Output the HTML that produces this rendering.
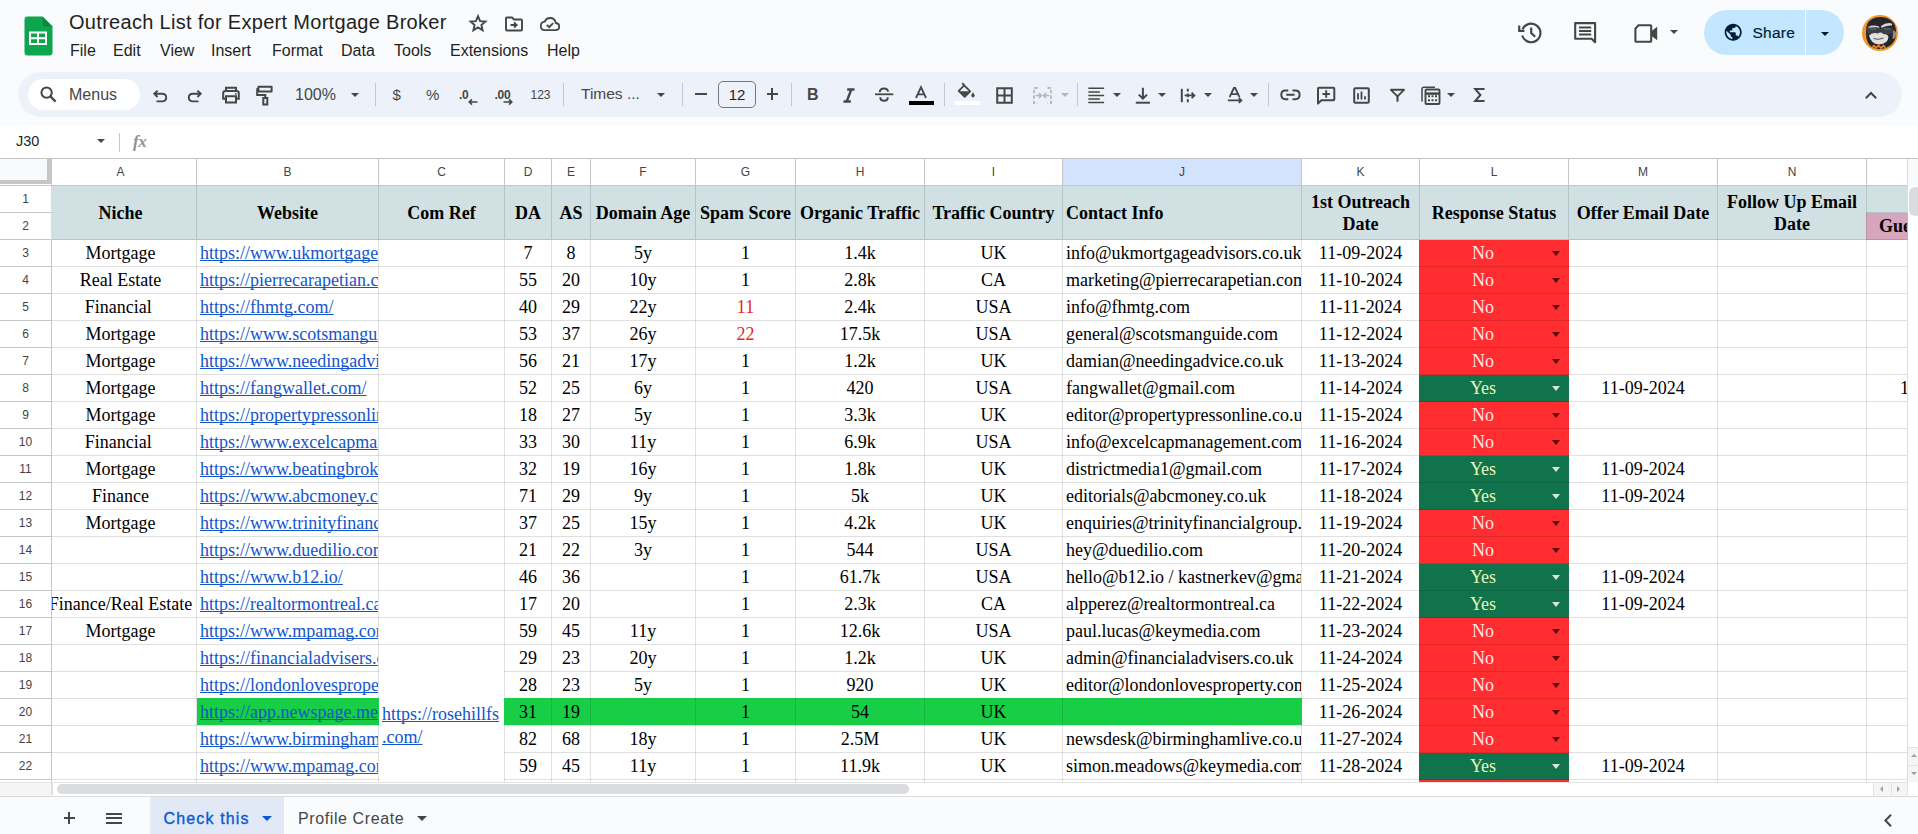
<!DOCTYPE html>
<html><head><meta charset="utf-8">
<style>
html,body{margin:0;padding:0}
body{width:1918px;height:834px;overflow:hidden;position:relative;background:#f9fbfd;font-family:"Liberation Sans",sans-serif;color:#1f1f1f}
.a{position:absolute}
.gl{background:#e2e2e2}
.gla{background:rgba(0,0,0,0.12)}
.cell{font-family:"Liberation Serif",serif;font-size:18px;line-height:26px;color:#000;white-space:nowrap;overflow:hidden}
.cell.hd{font-weight:bold;line-height:22px}
.cc{display:flex;justify-content:center;align-items:center;text-align:center;white-space:nowrap}
.lc{display:flex;align-items:center;white-space:nowrap}
.cell.hd1{font-weight:bold}
.ln a{color:#1155cc;text-decoration:underline;text-decoration-skip-ink:none;text-underline-offset:1px;text-decoration-thickness:1px}
.chip.no{color:#ffe6e6}
.chip.yes{color:#e9f5b9}
.tri{width:0;height:0;border-left:4.5px solid transparent;border-right:4.5px solid transparent;border-top:4.5px solid #444746}
.ui{font-family:"Liberation Sans",sans-serif;white-space:nowrap;line-height:1}
.menu{font-size:16px;color:#1f1f1f;top:43px}
.ic{position:absolute;overflow:visible}
.sep{position:absolute;width:1px;background:#c7c7c7;top:83px;height:23px}
.rh{position:absolute;left:0;width:51px;height:26px;line-height:26px;text-align:center;font-size:12px;color:#444;font-family:"Liberation Sans",sans-serif}
.ch{position:absolute;top:159px;height:26px;line-height:26px;text-align:center;font-size:12px;color:#444;font-family:"Liberation Sans",sans-serif}
</style></head><body>
<!-- header -->
<svg class="ic" style="left:24px;top:16px" width="29" height="40" viewBox="0 0 29 40">
 <path d="M3.5 0.5H18.5L28.5 10.5V36.5Q28.5 39.5 25.5 39.5H3.5Q0.5 39.5 0.5 36.5V3.5Q0.5 0.5 3.5 0.5Z" fill="#0ea54f"/>
 <path d="M18.5 0.5L28.5 10.5H21.5Q18.5 10.5 18.5 7.5Z" fill="#0a8a3f"/>
 <path d="M5 15.5H23V29H5Z M7 17.5V21.3H13V17.5Z M15 17.5V21.3H21V17.5Z M7 23.2V27H13V23.2Z M15 23.2V27H21V23.2Z" fill="#fff" fill-rule="evenodd"/>
</svg>
<div class="a ui" style="left:69px;top:12px;font-size:20px;letter-spacing:0.3px;color:#1f1f1f">Outreach List for Expert Mortgage Broker</div>
<svg class="ic" style="left:468px;top:14px" width="20" height="19" viewBox="0 0 20 19"><path d="M10 2.2L12.1 7.1L17.4 7.5L13.4 11L14.6 16.2L10 13.4L5.4 16.2L6.6 11L2.6 7.5L7.9 7.1Z" fill="none" stroke="#444746" stroke-width="1.9" stroke-linejoin="miter"/></svg>
<svg class="ic" style="left:504px;top:16px" width="20" height="16" viewBox="0 0 20 16"><path d="M2 2.5Q2 1.5 3 1.5H8L10 3.5H17Q18 3.5 18 4.5V13.5Q18 14.5 17 14.5H3Q2 14.5 2 13.5Z" fill="none" stroke="#444746" stroke-width="1.9"/><path d="M6.5 9H12.5M10 6.3L12.7 9L10 11.7" fill="none" stroke="#444746" stroke-width="1.8"/></svg>
<svg class="ic" style="left:539px;top:16px" width="22" height="16" viewBox="0 0 22 16"><path d="M6 14.2H16.5Q20.2 14.2 20.2 10.6Q20.2 7.3 16.8 7Q16 2 11 2Q7.2 2 5.8 5.6Q1.8 6 1.8 10Q1.8 14.2 6 14.2Z" fill="none" stroke="#444746" stroke-width="1.8"/><path d="M7.8 9L10.2 11.2L14.2 7.2" fill="none" stroke="#444746" stroke-width="1.8"/></svg>
<div class="a ui menu" style="left:70px">File</div>
<div class="a ui menu" style="left:113px">Edit</div>
<div class="a ui menu" style="left:160px">View</div>
<div class="a ui menu" style="left:211px">Insert</div>
<div class="a ui menu" style="left:272px">Format</div>
<div class="a ui menu" style="left:341px">Data</div>
<div class="a ui menu" style="left:394px">Tools</div>
<div class="a ui menu" style="left:450px">Extensions</div>
<div class="a ui menu" style="left:547px">Help</div>

<!-- top right -->
<svg class="ic" style="left:1517.5px;top:20px" width="26" height="25" viewBox="0 0 26 25"><path d="M4.6 9.2A9.3 9.3 0 1 1 4.2 15.5" fill="none" stroke="#444746" stroke-width="2.2"/><path d="M1.2 5.6V10.8H6.4" fill="none" stroke="#444746" stroke-width="2.2"/><path d="M13.2 7.5V13L17.2 16.8" fill="none" stroke="#444746" stroke-width="2.2"/></svg>
<svg class="ic" style="left:1573px;top:21px" width="25" height="24" viewBox="0 0 25 24"><path d="M2.2 2.1H22.1V21.3L18.6 17.8H2.2Z" fill="none" stroke="#444746" stroke-width="2.1" stroke-linejoin="round"/><path d="M6 6.6H18.2M6 10H18.2M6 13.4H18.2" stroke="#444746" stroke-width="2"/></svg>
<svg class="ic" style="left:1634px;top:23px" width="25" height="21" viewBox="0 0 25 21"><path d="M4.5 2.2H16.3Q17.2 2.2 17.2 3.1V17.9Q17.2 18.8 16.3 18.8H2.3Q1.4 18.8 1.4 17.9V5.6Z" fill="none" stroke="#444746" stroke-width="2.1" stroke-linejoin="round"/><path d="M17.2 8.3L23.2 3.8V17.2L17.2 12.7Z" fill="#444746"/></svg>
<div class="a tri" style="left:1669.5px;top:30px"></div>
<div class="a" style="left:1704px;top:10px;width:140px;height:45px;border-radius:23px;background:#c2e7ff"></div>
<div class="a" style="left:1805px;top:10px;width:1px;height:45px;background:#f9fbfd"></div>
<svg class="ic" style="left:1723.3px;top:22.3px" width="20.4" height="20.4" viewBox="0 0 24 24"><path d="M12 2C6.48 2 2 6.48 2 12s4.48 10 10 10 10-4.48 10-10S17.52 2 12 2zm-1 17.93c-3.950-.49-7-3.85-7-7.930 0-.62.08-1.21.21-1.79L9 15v1c0 1.1.9 2 2 2v1.93zm6.9-2.54c-.26-.81-1-1.39-1.9-1.39h-1v-3c0-.55-.45-1-1-1H8v-2h2c.55 0 1-.45 1-1V7h2c1.1 0 2-.9 2-2v-.41c2.93 1.19 5 4.06 5 7.41 0 2.08-.8 3.970-2.1 5.390z" fill="#001d35"/></svg>
<div class="a ui" style="left:1752.5px;top:25px;font-size:15.5px;letter-spacing:0.25px;-webkit-text-stroke:0.2px #001d35;color:#001d35">Share</div>
<div class="a tri" style="left:1820.5px;top:31.5px;border-top-color:#001d35;border-left-width:4.5px;border-right-width:4.5px"></div>
<svg class="ic" style="left:1862px;top:15px" width="36" height="36" viewBox="0 0 36 36">
 <circle cx="18" cy="18" r="18" fill="#f2982a"/>
 <path d="M4 17Q3.5 7 11 3.5Q18 1 25 3Q33 6 34 15Q35 24 30 29Q25 34 17 34Q9 33.5 6 28Q3.5 23 4 17Z" fill="#26262c"/>
 <path d="M31 15.5Q34.5 15.5 34 20Q33.5 24 30.5 24Z" fill="#8e8e90"/>
 <path d="M6 12Q11 9.5 17 11.5L17.5 13Q11 11.8 6.5 14Z M19 11Q24 7 30 8.5L30 10.5Q24.5 10 19.5 13Z" fill="#d6d6d6"/>
 <path d="M4.5 15Q4.5 12.5 8 12.5H15.5Q18 12.5 18.5 14.5Q19 12.5 21.5 12.5H29Q31.5 12.5 31 15.5Q30.5 19.5 26 19.5H22Q19.5 19.5 18.5 16.5Q17.5 19.5 15 19.5H8.5Q4.5 19.5 4.5 15Z" fill="#3d4048"/>
 <path d="M8 14H14M22 14H28" stroke="#6b6e75" stroke-width="1"/>
 <path d="M7 20.5Q11 17 16 18.5Q19 16.5 21 19Q26 19 26.5 22Q26 29 17 29.5Q9 29 7 20.5Z" fill="#e2e0da"/>
 <path d="M11.5 23.5Q16 25.5 21.5 23" fill="none" stroke="#55555a" stroke-width="1"/>
 <path d="M10 33L12 30.5L14 33L16.5 30.5L19 33L21.5 30.5L23.5 33" fill="none" stroke="#e8862a" stroke-width="1.6"/>
</svg>

<!-- toolbar -->
<div class="a" style="left:18px;top:72px;width:1884px;height:45px;border-radius:22.5px;background:#edf2fa"></div>
<div class="a" style="left:28px;top:79px;width:112px;height:31px;border-radius:15.5px;background:#fff"></div>
<svg class="ic" style="left:40px;top:86px" width="17" height="17" viewBox="0 0 17 17"><circle cx="6.6" cy="6.6" r="5.2" fill="none" stroke="#444746" stroke-width="2"/><path d="M10.4 10.4L15.6 15.6" stroke="#444746" stroke-width="2.2"/></svg>
<div class="a ui" style="left:69px;top:86.5px;font-size:16px;color:#444746">Menus</div>
<svg class="ic" style="left:152px;top:89px" width="16" height="14" viewBox="0 0 16 14"><path d="M2.5 4.8H10Q14.2 4.8 14.2 8.6Q14.2 12.4 10 12.4H4.5" fill="none" stroke="#444746" stroke-width="1.9"/><path d="M5.6 1.6L2.3 4.8L5.6 8" fill="none" stroke="#444746" stroke-width="1.9"/></svg>
<svg class="ic" style="left:187px;top:89px" width="16" height="14" viewBox="0 0 16 14"><path d="M13.5 4.8H6Q1.8 4.8 1.8 8.6Q1.8 12.4 6 12.4H11.5" fill="none" stroke="#444746" stroke-width="1.9"/><path d="M10.4 1.6L13.7 4.8L10.4 8" fill="none" stroke="#444746" stroke-width="1.9"/></svg>
<svg class="ic" style="left:221px;top:86px" width="20" height="18" viewBox="0 0 20 18"><path d="M5 5V1.8H15V5" fill="none" stroke="#444746" stroke-width="2"/><path d="M5 12.8H2.2V7.2Q2.2 5 4.4 5H15.6Q17.8 5 17.8 7.2V12.8H15" fill="none" stroke="#444746" stroke-width="2"/><path d="M5 10.2H15V16.4H5Z" fill="none" stroke="#444746" stroke-width="2"/><circle cx="14.8" cy="7.9" r="0.9" fill="#444746"/></svg>
<svg class="ic" style="left:256px;top:85px" width="19" height="21" viewBox="0 0 19 21"><path d="M2.4 1.8H15.6V6.6H2.4Z" fill="none" stroke="#444746" stroke-width="2" stroke-linejoin="round"/><path d="M2.4 4.2H1.2V10H9.3V13" fill="none" stroke="#444746" stroke-width="2"/><path d="M7.3 13H11.3V19.5H7.3Z" fill="none" stroke="#444746" stroke-width="2"/></svg>
<div class="a ui" style="left:295px;top:87px;font-size:16px;color:#444746">100%</div>
<div class="a tri" style="left:350.5px;top:92.5px"></div>
<div class="sep" style="left:375px"></div>
<div class="a ui" style="left:392.5px;top:86.5px;font-size:15px;color:#444746">$</div>
<div class="a ui" style="left:426px;top:87px;font-size:15px;color:#444746">%</div>
<div class="a ui" style="left:459px;top:89px;font-size:12px;color:#444746;font-weight:bold;letter-spacing:-0.3px">.0</div>
<svg class="ic" style="left:466.5px;top:97.5px" width="12" height="8" viewBox="0 0 12 8"><path d="M10.5 4H2.5M5 1.3L2.2 4L5 6.7" fill="none" stroke="#444746" stroke-width="1.6"/></svg>
<div class="a ui" style="left:494.5px;top:89px;font-size:12px;color:#444746;font-weight:bold;letter-spacing:-0.3px">.00</div>
<svg class="ic" style="left:502px;top:97.5px" width="12" height="8" viewBox="0 0 12 8"><path d="M1.5 4H9.5M7 1.3L9.8 4L7 6.7" fill="none" stroke="#444746" stroke-width="1.6"/></svg>
<div class="a ui" style="left:530.5px;top:88.5px;font-size:12px;color:#444746">123</div>
<div class="sep" style="left:563px"></div>
<div class="a ui" style="left:581px;top:86px;font-size:15.5px;color:#444746">Times ...</div>
<div class="a tri" style="left:656.5px;top:92.5px"></div>
<div class="sep" style="left:682px"></div>
<div class="a" style="left:695px;top:93px;width:12px;height:2px;background:#444746"></div>
<div class="a" style="left:718px;top:81px;width:36px;height:25px;border:1px solid #747775;border-radius:5px"></div>
<div class="a ui" style="left:718px;top:86.5px;width:38px;text-align:center;font-size:15px;color:#1f1f1f">12</div>
<div class="a" style="left:766.5px;top:93.3px;width:11.5px;height:2px;background:#444746"></div>
<div class="a" style="left:771.3px;top:88.3px;width:2px;height:12px;background:#444746"></div>
<div class="sep" style="left:791px"></div>
<div class="a ui" style="left:807px;top:87px;font-size:16px;font-weight:bold;color:#444746">B</div>
<svg class="ic" style="left:842px;top:88px" width="14" height="15" viewBox="0 0 14 15"><path d="M5.2 1.5H12.5M1.5 13.5H8.8M9.3 1.5L4.7 13.5" fill="none" stroke="#444746" stroke-width="2.3"/></svg>
<svg class="ic" style="left:874px;top:87px" width="20" height="16" viewBox="0 0 20 16"><path d="M1 7.3H19.3" stroke="#444746" stroke-width="1.8"/><path d="M5.8 5.2Q6 1.6 10 1.6Q13.6 1.6 14.1 4.6" fill="none" stroke="#444746" stroke-width="2"/><path d="M6.3 10.2Q6.3 13.7 10.1 13.7Q13.8 13.7 13.8 10.2" fill="none" stroke="#444746" stroke-width="2"/></svg>
<svg class="ic" style="left:914px;top:86px" width="14" height="13" viewBox="0 0 14 13"><path d="M2 12L7 1.2L12 12M3.8 8.4H10.2" fill="none" stroke="#444746" stroke-width="1.8"/></svg>
<div class="a" style="left:909px;top:101px;width:25px;height:4px;background:#000"></div>
<div class="sep" style="left:944px"></div>
<svg class="ic" style="left:957px;top:82px" width="19" height="17" viewBox="0 0 19 17"><path d="M5.2 1.2L7.3 3.3" stroke="#444746" stroke-width="1.8"/><path d="M7.2 3.3L13.2 9.3L7.7 14.8L1.7 8.8Z" fill="none" stroke="#444746" stroke-width="1.8" stroke-linejoin="round"/><path d="M2.6 9.3H12.6L7.7 14.2Z" fill="#444746"/><path d="M16 10.2Q14.3 12.6 14.3 13.6Q14.3 15.4 16 15.4Q17.7 15.4 17.7 13.6Q17.7 12.6 16 10.2Z" fill="#444746"/></svg>
<div class="a" style="left:954px;top:101px;width:26px;height:4px;background:#fff"></div>
<svg class="ic" style="left:996px;top:87px" width="17" height="17" viewBox="0 0 17 17"><path d="M1.2 1.2H15.8V15.8H1.2Z M8.5 1.2V15.8M1.2 8.5H15.8" fill="none" stroke="#444746" stroke-width="2"/></svg>
<svg class="ic" style="left:1033px;top:87px" width="19" height="17" viewBox="0 0 19 17"><path d="M4.5 1H1V16H4.5M14.5 1H18V16H14.5" fill="none" stroke="#b4b7ba" stroke-width="1.8" stroke-dasharray="3.4 2"/><path d="M2.8 8.5H8M6 6L8.3 8.5L6 11M16.2 8.5H11M13 6L10.7 8.5L13 11" fill="none" stroke="#b4b7ba" stroke-width="1.7"/></svg>
<div class="a tri" style="left:1060.5px;top:92.5px;border-top-color:#b4b7ba"></div>
<div class="sep" style="left:1077px"></div>
<svg class="ic" style="left:1088px;top:87px" width="17" height="17" viewBox="0 0 17 17"><path d="M0.3 1.3H16.1M0.3 4.9H11.8M0.3 8.5H16.1M0.3 12H11.8M0.3 15.5H16.1" stroke="#444746" stroke-width="1.5"/></svg>
<div class="a tri" style="left:1112.5px;top:92.5px"></div>
<svg class="ic" style="left:1135px;top:87px" width="16" height="17" viewBox="0 0 16 17"><path d="M0.8 15.7H15" stroke="#444746" stroke-width="2"/><path d="M7.9 0.8V11.5M3.8 7.6L7.9 11.7L12 7.6" fill="none" stroke="#444746" stroke-width="2"/></svg>
<div class="a tri" style="left:1158px;top:92.5px"></div>
<svg class="ic" style="left:1180px;top:88px" width="16" height="15" viewBox="0 0 16 15"><path d="M1.8 0.8V14.2" stroke="#444746" stroke-width="2"/><path d="M7.8 0.8V3.5M7.8 5.6V9.2M7.8 11.3V14.2" stroke="#444746" stroke-width="2"/><path d="M4.6 7.4H14.4M11.6 4.6L14.4 7.4L11.6 10.2" fill="none" stroke="#444746" stroke-width="1.8"/></svg>
<div class="a tri" style="left:1203.5px;top:92.5px"></div>
<svg class="ic" style="left:1227px;top:87px" width="17" height="17" viewBox="0 0 17 17"><path d="M2.6 10.2L6.9 1H8.2L12.5 10.2M4 7.2H11.1" fill="none" stroke="#444746" stroke-width="1.8"/><path d="M0.8 13.4H14.2M11.8 10.9L14.4 13.4L11.8 15.9" fill="none" stroke="#444746" stroke-width="1.8"/></svg>
<div class="a tri" style="left:1250px;top:92.5px"></div>
<div class="sep" style="left:1268px"></div>
<svg class="ic" style="left:1280px;top:89px" width="21" height="12" viewBox="0 0 21 12"><path d="M8.3 1.5H5.5Q1.3 1.5 1.3 5.8Q1.3 10.2 5.5 10.2H8.3M12.5 1.5H15.3Q19.6 1.5 19.6 5.8Q19.6 10.2 15.3 10.2H12.5M6.2 5.8H14.6" fill="none" stroke="#444746" stroke-width="2"/></svg>
<svg class="ic" style="left:1316px;top:86px" width="20" height="19" viewBox="0 0 20 19"><path d="M2 17.6V2.8Q2 1.8 3 1.8H17.3Q18.3 1.8 18.3 2.8V13.2Q18.3 14.2 17.3 14.2H5.4Z" fill="none" stroke="#444746" stroke-width="2" stroke-linejoin="round"/><path d="M10.2 4.3V11.7M6.5 8H13.9" stroke="#444746" stroke-width="1.9"/></svg>
<svg class="ic" style="left:1353px;top:87px" width="17" height="17" viewBox="0 0 17 17"><path d="M1.2 2.2Q1.2 1.2 2.2 1.2H14.8Q15.8 1.2 15.8 2.2V14.8Q15.8 15.8 14.8 15.8H2.2Q1.2 15.8 1.2 14.8Z" fill="none" stroke="#444746" stroke-width="2"/><path d="M5 6.2V12.5M8.5 4.5V12.5M12 9.3V12.5" stroke="#444746" stroke-width="1.8"/></svg>
<svg class="ic" style="left:1390px;top:88px" width="15" height="14" viewBox="0 0 15 14"><path d="M1 1.8H14L7.5 8.4Z" fill="none" stroke="#444746" stroke-width="1.9" stroke-linejoin="round"/><path d="M7.5 7.5V13.7" stroke="#444746" stroke-width="2.1"/></svg>
<svg class="ic" style="left:1420px;top:86px" width="21" height="19" viewBox="0 0 21 19"><path d="M2 15.5V3Q2 1.2 3.8 1.2H15" fill="none" stroke="#444746" stroke-width="1.5"/><path d="M5.5 4.5Q5.5 3.5 6.5 3.5H18.5Q19.5 3.5 19.5 4.5V17Q19.5 18 18.5 18H6.5Q5.5 18 5.5 17Z" fill="none" stroke="#444746" stroke-width="1.9"/><path d="M5.8 7.6H19.2" stroke="#444746" stroke-width="2.5"/><path d="M8 10.3H10M11.5 10.3H13.5M15 10.3H17M8 14.3H10M11.5 14.3H13.5M15 14.3H17" stroke="#444746" stroke-width="2"/></svg>
<div class="a tri" style="left:1446.5px;top:92.5px"></div>
<svg class="ic" style="left:1474px;top:88px" width="11" height="14" viewBox="0 0 11 14"><path d="M10.6 1H1.2L6.4 7L1.2 13H10.6" fill="none" stroke="#444746" stroke-width="2"/></svg>
<svg class="ic" style="left:1864px;top:90px" width="14" height="10" viewBox="0 0 14 10"><path d="M1.8 8.2L7 3L12.2 8.2" fill="none" stroke="#444746" stroke-width="2"/></svg>

<!-- formula bar -->
<div class="a" style="left:0;top:126px;width:1918px;height:32px;background:#fff"></div>
<div class="a" style="left:0;top:158px;width:1918px;height:1px;background:#c4c7c5"></div>
<div class="a ui" style="left:16px;top:134px;font-size:14.5px;color:#1f1f1f">J30</div>
<div class="a tri" style="left:96.5px;top:139.3px"></div>
<div class="a" style="left:119px;top:133px;width:1px;height:19px;background:#c7c7c7"></div>
<div class="a" style="left:133px;top:133px;font-family:'Liberation Serif',serif;font-style:italic;font-weight:bold;font-size:17px;line-height:1;color:#909293;letter-spacing:-0.5px">fx</div>

<div class="a" style="left:0;top:159px;width:1918px;height:26px;background:#fff"></div>
<div class="a" style="left:1063px;top:159px;width:238px;height:26px;background:#d3e3fd"></div>
<div class="ch" style="left:45px;width:151px">A</div>
<div class="ch" style="left:197px;width:181px">B</div>
<div class="ch" style="left:379px;width:125px">C</div>
<div class="ch" style="left:505px;width:46px">D</div>
<div class="ch" style="left:552px;width:38px">E</div>
<div class="ch" style="left:591px;width:104px">F</div>
<div class="ch" style="left:696px;width:99px">G</div>
<div class="ch" style="left:796px;width:128px">H</div>
<div class="ch" style="left:925px;width:137px">I</div>
<div class="ch" style="left:1063px;width:238px">J</div>
<div class="ch" style="left:1302px;width:117px">K</div>
<div class="ch" style="left:1420px;width:148px">L</div>
<div class="ch" style="left:1569px;width:148px">M</div>
<div class="ch" style="left:1718px;width:148px">N</div>
<div class="ch" style="left:1867px;width:40px"></div>
<div class="a" style="left:196px;top:159px;width:1px;height:26px;background:#c4c7c5"></div>
<div class="a" style="left:378px;top:159px;width:1px;height:26px;background:#c4c7c5"></div>
<div class="a" style="left:504px;top:159px;width:1px;height:26px;background:#c4c7c5"></div>
<div class="a" style="left:551px;top:159px;width:1px;height:26px;background:#c4c7c5"></div>
<div class="a" style="left:590px;top:159px;width:1px;height:26px;background:#c4c7c5"></div>
<div class="a" style="left:695px;top:159px;width:1px;height:26px;background:#c4c7c5"></div>
<div class="a" style="left:795px;top:159px;width:1px;height:26px;background:#c4c7c5"></div>
<div class="a" style="left:924px;top:159px;width:1px;height:26px;background:#c4c7c5"></div>
<div class="a" style="left:1062px;top:159px;width:1px;height:26px;background:#c4c7c5"></div>
<div class="a" style="left:1301px;top:159px;width:1px;height:26px;background:#c4c7c5"></div>
<div class="a" style="left:1419px;top:159px;width:1px;height:26px;background:#c4c7c5"></div>
<div class="a" style="left:1568px;top:159px;width:1px;height:26px;background:#c4c7c5"></div>
<div class="a" style="left:1717px;top:159px;width:1px;height:26px;background:#c4c7c5"></div>
<div class="a" style="left:1866px;top:159px;width:1px;height:26px;background:#c4c7c5"></div>
<div class="a" style="left:1907px;top:159px;width:1px;height:26px;background:#c4c7c5"></div>
<div class="a" style="left:0;top:185px;width:1907px;height:1px;background:#c4c7c5"></div>
<div class="a" style="left:0;top:159px;width:47px;height:21px;background:#f8f9fa"></div>
<div class="a" style="left:0;top:180px;width:51px;height:4px;background:#c6c6c6"></div>
<div class="a" style="left:47px;top:159px;width:4px;height:25px;background:#c6c6c6"></div>
<div class="a" style="left:0;top:186px;width:51px;height:594px;background:#fff"></div>
<div class="rh" style="top:186px">1</div>
<div class="a" style="left:0;top:212px;width:51px;height:1px;background:#c4c7c5"></div>
<div class="rh" style="top:213px">2</div>
<div class="a" style="left:0;top:239px;width:51px;height:1px;background:#c4c7c5"></div>
<div class="rh" style="top:240px">3</div>
<div class="a" style="left:0;top:266px;width:51px;height:1px;background:#c4c7c5"></div>
<div class="rh" style="top:267px">4</div>
<div class="a" style="left:0;top:293px;width:51px;height:1px;background:#c4c7c5"></div>
<div class="rh" style="top:294px">5</div>
<div class="a" style="left:0;top:320px;width:51px;height:1px;background:#c4c7c5"></div>
<div class="rh" style="top:321px">6</div>
<div class="a" style="left:0;top:347px;width:51px;height:1px;background:#c4c7c5"></div>
<div class="rh" style="top:348px">7</div>
<div class="a" style="left:0;top:374px;width:51px;height:1px;background:#c4c7c5"></div>
<div class="rh" style="top:375px">8</div>
<div class="a" style="left:0;top:401px;width:51px;height:1px;background:#c4c7c5"></div>
<div class="rh" style="top:402px">9</div>
<div class="a" style="left:0;top:428px;width:51px;height:1px;background:#c4c7c5"></div>
<div class="rh" style="top:429px">10</div>
<div class="a" style="left:0;top:455px;width:51px;height:1px;background:#c4c7c5"></div>
<div class="rh" style="top:456px">11</div>
<div class="a" style="left:0;top:482px;width:51px;height:1px;background:#c4c7c5"></div>
<div class="rh" style="top:483px">12</div>
<div class="a" style="left:0;top:509px;width:51px;height:1px;background:#c4c7c5"></div>
<div class="rh" style="top:510px">13</div>
<div class="a" style="left:0;top:536px;width:51px;height:1px;background:#c4c7c5"></div>
<div class="rh" style="top:537px">14</div>
<div class="a" style="left:0;top:563px;width:51px;height:1px;background:#c4c7c5"></div>
<div class="rh" style="top:564px">15</div>
<div class="a" style="left:0;top:590px;width:51px;height:1px;background:#c4c7c5"></div>
<div class="rh" style="top:591px">16</div>
<div class="a" style="left:0;top:617px;width:51px;height:1px;background:#c4c7c5"></div>
<div class="rh" style="top:618px">17</div>
<div class="a" style="left:0;top:644px;width:51px;height:1px;background:#c4c7c5"></div>
<div class="rh" style="top:645px">18</div>
<div class="a" style="left:0;top:671px;width:51px;height:1px;background:#c4c7c5"></div>
<div class="rh" style="top:672px">19</div>
<div class="a" style="left:0;top:698px;width:51px;height:1px;background:#c4c7c5"></div>
<div class="rh" style="top:699px">20</div>
<div class="a" style="left:0;top:725px;width:51px;height:1px;background:#c4c7c5"></div>
<div class="rh" style="top:726px">21</div>
<div class="a" style="left:0;top:752px;width:51px;height:1px;background:#c4c7c5"></div>
<div class="rh" style="top:753px">22</div>
<div class="a" style="left:0;top:779px;width:51px;height:1px;background:#c4c7c5"></div>
<div class="a" style="left:51px;top:159px;width:1px;height:623px;background:#c4c7c5"></div>
<div class="a" style="left:0;top:780px;width:51px;height:2px;background:#fff"></div>
<div class="a" style="left:0;top:782px;width:1918px;height:1px;background:#e3e3e3"></div>
<div class="a" style="left:0;top:783px;width:1918px;height:13px;background:#fff"></div>
<div class="a" style="left:0;top:783px;width:51px;height:13px;background:#f5f5f5"></div>
<div class="a" style="left:51px;top:783px;width:2px;height:12px;background:#dedede"></div>
<div class="a" style="left:57px;top:784px;width:852px;height:10px;border-radius:5px;background:#dadce0"></div>
<div class="a" style="left:1873px;top:783px;width:34px;height:13px;background:#f5f5f5"></div>
<div class="a" style="left:1891px;top:783px;width:1px;height:13px;background:#e3e3e3"></div>
<div class="a" style="left:1873px;top:783px;width:1px;height:13px;background:#e3e3e3"></div>
<div class="a" style="left:1907px;top:783px;width:1px;height:13px;background:#e3e3e3"></div>
<div class="a" style="left:1880px;top:785.5px;width:0;height:0;border-top:3.5px solid transparent;border-bottom:3.5px solid transparent;border-right:3.5px solid #9aa0a6"></div>
<div class="a" style="left:1897px;top:785.5px;width:0;height:0;border-top:3.5px solid transparent;border-bottom:3.5px solid transparent;border-left:3.5px solid #9aa0a6"></div>
<div class="a" style="left:0;top:796px;width:1918px;height:1px;background:#dadce0"></div>
<div class="a" style="left:1907px;top:159px;width:1px;height:624px;background:#dcdcdc"></div>
<div class="a" style="left:1908px;top:159px;width:10px;height:26px;background:#f8f9fa"></div>
<div class="a" style="left:1908px;top:186px;width:10px;height:597px;background:#fff"></div>
<div class="a" style="left:1909px;top:187px;width:12px;height:29px;border-radius:6px;background:#dadce0"></div>
<div class="a" style="left:1908px;top:747px;width:10px;height:35px;background:#f5f5f5"></div>
<div class="a" style="left:1908px;top:747px;width:10px;height:1px;background:#e3e3e3"></div>
<div class="a" style="left:1908px;top:765px;width:10px;height:1px;background:#e3e3e3"></div>
<div class="a" style="left:1911px;top:753.5px;width:0;height:0;border-left:3.5px solid transparent;border-right:3.5px solid transparent;border-bottom:3.5px solid #9aa0a6"></div>
<div class="a" style="left:1911px;top:772px;width:0;height:0;border-left:3.5px solid transparent;border-right:3.5px solid transparent;border-top:3.5px solid #9aa0a6"></div>
<div class="a" style="left:0;top:797px;width:1918px;height:37px;background:#f9fbfd"></div>
<div class="a" style="left:63.5px;top:817.2px;width:11.5px;height:2px;background:#444746"></div>
<div class="a" style="left:68.2px;top:812.3px;width:2px;height:12px;background:#444746"></div>
<div class="a" style="left:106px;top:813px;width:16px;height:2px;background:#444746"></div>
<div class="a" style="left:106px;top:817.2px;width:16px;height:2px;background:#444746"></div>
<div class="a" style="left:106px;top:821.6px;width:16px;height:2px;background:#444746"></div>
<div class="a" style="left:150px;top:797px;width:134px;height:37px;background:#e1e9f7"></div>
<div class="a ui" style="left:163.5px;top:811px;font-size:16px;letter-spacing:1.15px;-webkit-text-stroke:0.35px #0b57d0;color:#0b57d0">Check this</div>
<div class="a tri" style="left:261.5px;top:816px;border-top-color:#0b57d0;border-left-width:5px;border-right-width:5px;border-top-width:5.5px"></div>
<div class="a ui" style="left:298px;top:811px;font-size:16px;letter-spacing:0.6px;color:#444746">Profile Create</div>
<div class="a tri" style="left:417px;top:816px;border-left-width:5px;border-right-width:5px;border-top-width:5.5px"></div>
<svg class="ic" style="left:1883px;top:813px" width="10" height="15" viewBox="0 0 10 15"><path d="M8 1.8L2.4 7.5L8 13.2" fill="none" stroke="#444746" stroke-width="2"/></svg>
<div class="a" style="left:52px;top:186px;width:1855px;height:596px;background:#fff"></div>
<div class="a gl" style="left:196px;top:186px;width:1px;height:596px"></div>
<div class="a gl" style="left:378px;top:186px;width:1px;height:596px"></div>
<div class="a gl" style="left:504px;top:186px;width:1px;height:596px"></div>
<div class="a gl" style="left:551px;top:186px;width:1px;height:596px"></div>
<div class="a gl" style="left:590px;top:186px;width:1px;height:596px"></div>
<div class="a gl" style="left:695px;top:186px;width:1px;height:596px"></div>
<div class="a gl" style="left:795px;top:186px;width:1px;height:596px"></div>
<div class="a gl" style="left:924px;top:186px;width:1px;height:596px"></div>
<div class="a gl" style="left:1062px;top:186px;width:1px;height:596px"></div>
<div class="a gl" style="left:1301px;top:186px;width:1px;height:596px"></div>
<div class="a gl" style="left:1419px;top:186px;width:1px;height:596px"></div>
<div class="a gl" style="left:1568px;top:186px;width:1px;height:596px"></div>
<div class="a gl" style="left:1717px;top:186px;width:1px;height:596px"></div>
<div class="a gl" style="left:1866px;top:186px;width:1px;height:596px"></div>
<div class="a" style="left:51px;top:186px;width:146px;height:54px;background:#d0e0e3"></div>
<div class="a" style="left:196px;top:186px;width:183px;height:54px;background:#d0e0e3"></div>
<div class="a" style="left:378px;top:186px;width:127px;height:54px;background:#d0e0e3"></div>
<div class="a" style="left:504px;top:186px;width:48px;height:54px;background:#d0e0e3"></div>
<div class="a" style="left:551px;top:186px;width:40px;height:54px;background:#d0e0e3"></div>
<div class="a" style="left:590px;top:186px;width:106px;height:54px;background:#d0e0e3"></div>
<div class="a" style="left:695px;top:186px;width:101px;height:54px;background:#d0e0e3"></div>
<div class="a" style="left:795px;top:186px;width:130px;height:54px;background:#d0e0e3"></div>
<div class="a" style="left:924px;top:186px;width:139px;height:54px;background:#d0e0e3"></div>
<div class="a" style="left:1062px;top:186px;width:240px;height:54px;background:#d0e0e3"></div>
<div class="a" style="left:1301px;top:186px;width:119px;height:54px;background:#d0e0e3"></div>
<div class="a" style="left:1419px;top:186px;width:150px;height:54px;background:#d0e0e3"></div>
<div class="a" style="left:1568px;top:186px;width:150px;height:54px;background:#d0e0e3"></div>
<div class="a" style="left:1717px;top:186px;width:150px;height:54px;background:#d0e0e3"></div>
<div class="a" style="left:1866px;top:186px;width:42px;height:27px;background:#d0e0e3"></div>
<div class="a" style="left:1866px;top:213px;width:42px;height:27px;background:#d5a6bd"></div>
<div class="a" style="left:1419px;top:240px;width:150px;height:27px;background:#ff2d2f"></div>
<div class="a" style="left:1419px;top:267px;width:150px;height:27px;background:#ff2d2f"></div>
<div class="a" style="left:1419px;top:294px;width:150px;height:27px;background:#ff2d2f"></div>
<div class="a" style="left:1419px;top:321px;width:150px;height:27px;background:#ff2d2f"></div>
<div class="a" style="left:1419px;top:348px;width:150px;height:27px;background:#ff2d2f"></div>
<div class="a" style="left:1419px;top:375px;width:150px;height:27px;background:#11734b"></div>
<div class="a" style="left:1419px;top:402px;width:150px;height:27px;background:#ff2d2f"></div>
<div class="a" style="left:1419px;top:429px;width:150px;height:27px;background:#ff2d2f"></div>
<div class="a" style="left:1419px;top:456px;width:150px;height:27px;background:#11734b"></div>
<div class="a" style="left:1419px;top:483px;width:150px;height:27px;background:#11734b"></div>
<div class="a" style="left:1419px;top:510px;width:150px;height:27px;background:#ff2d2f"></div>
<div class="a" style="left:1419px;top:537px;width:150px;height:27px;background:#ff2d2f"></div>
<div class="a" style="left:1419px;top:564px;width:150px;height:27px;background:#11734b"></div>
<div class="a" style="left:1419px;top:591px;width:150px;height:27px;background:#11734b"></div>
<div class="a" style="left:1419px;top:618px;width:150px;height:27px;background:#ff2d2f"></div>
<div class="a" style="left:1419px;top:645px;width:150px;height:27px;background:#ff2d2f"></div>
<div class="a" style="left:1419px;top:672px;width:150px;height:27px;background:#ff2d2f"></div>
<div class="a" style="left:1419px;top:699px;width:150px;height:27px;background:#ff2d2f"></div>
<div class="a" style="left:1419px;top:726px;width:150px;height:27px;background:#ff2d2f"></div>
<div class="a" style="left:1419px;top:753px;width:150px;height:27px;background:#11734b"></div>
<div class="a" style="left:1419px;top:780px;width:150px;height:2px;background:#ff2d2f"></div>
<div class="a" style="left:197px;top:698px;width:182px;height:27px;background:#18ce47"></div>
<div class="a" style="left:504px;top:698px;width:798px;height:27px;background:#18ce47"></div>
<div class="a gla" style="left:1866px;top:212px;width:41px;height:1px"></div>
<div class="a gla" style="left:52px;top:239px;width:1855px;height:1px"></div>
<div class="a gla" style="left:52px;top:266px;width:1855px;height:1px"></div>
<div class="a gla" style="left:52px;top:293px;width:1855px;height:1px"></div>
<div class="a gla" style="left:52px;top:320px;width:1855px;height:1px"></div>
<div class="a gla" style="left:52px;top:347px;width:1855px;height:1px"></div>
<div class="a gla" style="left:52px;top:374px;width:1855px;height:1px"></div>
<div class="a gla" style="left:52px;top:401px;width:1855px;height:1px"></div>
<div class="a gla" style="left:52px;top:428px;width:1855px;height:1px"></div>
<div class="a gla" style="left:52px;top:455px;width:1855px;height:1px"></div>
<div class="a gla" style="left:52px;top:482px;width:1855px;height:1px"></div>
<div class="a gla" style="left:52px;top:509px;width:1855px;height:1px"></div>
<div class="a gla" style="left:52px;top:536px;width:1855px;height:1px"></div>
<div class="a gla" style="left:52px;top:563px;width:1855px;height:1px"></div>
<div class="a gla" style="left:52px;top:590px;width:1855px;height:1px"></div>
<div class="a gla" style="left:52px;top:617px;width:1855px;height:1px"></div>
<div class="a gla" style="left:52px;top:644px;width:1855px;height:1px"></div>
<div class="a gla" style="left:52px;top:671px;width:327px;height:1px"></div>
<div class="a gla" style="left:504px;top:671px;width:1403px;height:1px"></div>
<div class="a gla" style="left:52px;top:698px;width:145px;height:1px"></div>
<div class="a gla" style="left:1302px;top:698px;width:605px;height:1px"></div>
<div class="a gla" style="left:52px;top:725px;width:327px;height:1px"></div>
<div class="a gla" style="left:504px;top:725px;width:1403px;height:1px"></div>
<div class="a gla" style="left:52px;top:752px;width:327px;height:1px"></div>
<div class="a gla" style="left:504px;top:752px;width:1403px;height:1px"></div>
<div class="a gla" style="left:52px;top:779px;width:327px;height:1px"></div>
<div class="a gla" style="left:504px;top:779px;width:1403px;height:1px"></div>
<div class="a gla" style="left:196px;top:186px;width:1px;height:53px"></div>
<div class="a gla" style="left:378px;top:186px;width:1px;height:53px"></div>
<div class="a gla" style="left:504px;top:186px;width:1px;height:53px"></div>
<div class="a gla" style="left:551px;top:186px;width:1px;height:53px"></div>
<div class="a gla" style="left:590px;top:186px;width:1px;height:53px"></div>
<div class="a gla" style="left:695px;top:186px;width:1px;height:53px"></div>
<div class="a gla" style="left:795px;top:186px;width:1px;height:53px"></div>
<div class="a gla" style="left:924px;top:186px;width:1px;height:53px"></div>
<div class="a gla" style="left:1062px;top:186px;width:1px;height:53px"></div>
<div class="a gla" style="left:1301px;top:186px;width:1px;height:53px"></div>
<div class="a gla" style="left:1419px;top:186px;width:1px;height:53px"></div>
<div class="a gla" style="left:1568px;top:186px;width:1px;height:53px"></div>
<div class="a gla" style="left:1717px;top:186px;width:1px;height:53px"></div>
<div class="a gla" style="left:1866px;top:186px;width:1px;height:53px"></div>
<div class="a gla" style="left:551px;top:698px;width:1px;height:27px"></div>
<div class="a gla" style="left:590px;top:698px;width:1px;height:27px"></div>
<div class="a gla" style="left:695px;top:698px;width:1px;height:27px"></div>
<div class="a gla" style="left:795px;top:698px;width:1px;height:27px"></div>
<div class="a gla" style="left:924px;top:698px;width:1px;height:27px"></div>
<div class="a gla" style="left:1062px;top:698px;width:1px;height:27px"></div>
<div class="a cell hd" style="left:52px;top:186px;width:144px;height:53px;"><div class="a cc" style="left:-7px;top:0;width:151px;height:53px">Niche</div></div>
<div class="a cell hd" style="left:197px;top:186px;width:181px;height:53px;"><div class="a cc" style="left:0px;top:0;width:181px;height:53px">Website</div></div>
<div class="a cell hd" style="left:379px;top:186px;width:125px;height:53px;"><div class="a cc" style="left:0px;top:0;width:125px;height:53px">Com Ref</div></div>
<div class="a cell hd" style="left:505px;top:186px;width:46px;height:53px;"><div class="a cc" style="left:0px;top:0;width:46px;height:53px">DA</div></div>
<div class="a cell hd" style="left:552px;top:186px;width:38px;height:53px;"><div class="a cc" style="left:0px;top:0;width:38px;height:53px">AS</div></div>
<div class="a cell hd" style="left:591px;top:186px;width:104px;height:53px;"><div class="a cc" style="left:0px;top:0;width:104px;height:53px">Domain Age</div></div>
<div class="a cell hd" style="left:696px;top:186px;width:99px;height:53px;"><div class="a cc" style="left:0px;top:0;width:99px;height:53px">Spam Score</div></div>
<div class="a cell hd" style="left:796px;top:186px;width:128px;height:53px;"><div class="a cc" style="left:0px;top:0;width:128px;height:53px">Organic Traffic</div></div>
<div class="a cell hd" style="left:925px;top:186px;width:137px;height:53px;"><div class="a cc" style="left:0px;top:0;width:137px;height:53px">Traffic Country</div></div>
<div class="a cell hd" style="left:1063px;top:186px;width:238px;height:53px;"><div class="a lc" style="left:3px;top:0;height:53px">Contact Info</div></div>
<div class="a cell hd" style="left:1302px;top:186px;width:117px;height:53px;"><div class="a cc" style="left:0px;top:0;width:117px;height:53px">1st Outreach<br>Date</div></div>
<div class="a cell hd" style="left:1420px;top:186px;width:148px;height:53px;"><div class="a cc" style="left:0px;top:0;width:148px;height:53px">Response Status</div></div>
<div class="a cell hd" style="left:1569px;top:186px;width:148px;height:53px;"><div class="a cc" style="left:0px;top:0;width:148px;height:53px">Offer Email Date</div></div>
<div class="a cell hd" style="left:1718px;top:186px;width:148px;height:53px;"><div class="a cc" style="left:0px;top:0;width:148px;height:53px">Follow Up Email<br>Date</div></div>
<div class="a cell hd1" style="left:1867px;top:213px;width:40px;height:26px;"><div class="a lc" style="left:3px;top:0;height:26px"><span style="position:absolute;left:9px;top:0">Guest Post</span></div></div>
<div class="a cell " style="left:52px;top:240px;width:144px;height:26px;"><div class="a cc" style="left:-7px;top:0;width:151px;height:26px">Mortgage</div></div>
<div class="a cell ln" style="left:197px;top:240px;width:181px;height:26px;"><div class="a lc" style="left:3px;top:0;height:26px"><a>https://www.ukmortgageadvisors.co.uk/</a></div></div>
<div class="a cell " style="left:505px;top:240px;width:46px;height:26px;"><div class="a cc" style="left:0px;top:0;width:46px;height:26px">7</div></div>
<div class="a cell " style="left:552px;top:240px;width:38px;height:26px;"><div class="a cc" style="left:0px;top:0;width:38px;height:26px">8</div></div>
<div class="a cell " style="left:591px;top:240px;width:104px;height:26px;"><div class="a cc" style="left:0px;top:0;width:104px;height:26px">5y</div></div>
<div class="a cell " style="left:696px;top:240px;width:99px;height:26px;"><div class="a cc" style="left:0px;top:0;width:99px;height:26px">1</div></div>
<div class="a cell " style="left:796px;top:240px;width:128px;height:26px;"><div class="a cc" style="left:0px;top:0;width:128px;height:26px">1.4k</div></div>
<div class="a cell " style="left:925px;top:240px;width:137px;height:26px;"><div class="a cc" style="left:0px;top:0;width:137px;height:26px">UK</div></div>
<div class="a cell lf" style="left:1063px;top:240px;width:238px;height:26px;"><div class="a lc" style="left:3px;top:0;height:26px">info@ukmortgageadvisors.co.uk</div></div>
<div class="a cell " style="left:1302px;top:240px;width:117px;height:26px;"><div class="a cc" style="left:0px;top:0;width:117px;height:26px">11-09-2024</div></div>
<div class="a cell chip no" style="left:1420px;top:240px;width:148px;height:26px;"><div class="a cc" style="left:0px;top:0;width:126px;height:26px">No</div></div>
<div class="a tri" style="left:1552px;top:250.5px;border-top-width:5px;border-top-color:#5b0a0a"></div>
<div class="a cell " style="left:52px;top:267px;width:144px;height:26px;"><div class="a cc" style="left:-7px;top:0;width:151px;height:26px">Real Estate</div></div>
<div class="a cell ln" style="left:197px;top:267px;width:181px;height:26px;"><div class="a lc" style="left:3px;top:0;height:26px"><a>https://pierrecarapetian.com/</a></div></div>
<div class="a cell " style="left:505px;top:267px;width:46px;height:26px;"><div class="a cc" style="left:0px;top:0;width:46px;height:26px">55</div></div>
<div class="a cell " style="left:552px;top:267px;width:38px;height:26px;"><div class="a cc" style="left:0px;top:0;width:38px;height:26px">20</div></div>
<div class="a cell " style="left:591px;top:267px;width:104px;height:26px;"><div class="a cc" style="left:0px;top:0;width:104px;height:26px">10y</div></div>
<div class="a cell " style="left:696px;top:267px;width:99px;height:26px;"><div class="a cc" style="left:0px;top:0;width:99px;height:26px">1</div></div>
<div class="a cell " style="left:796px;top:267px;width:128px;height:26px;"><div class="a cc" style="left:0px;top:0;width:128px;height:26px">2.8k</div></div>
<div class="a cell " style="left:925px;top:267px;width:137px;height:26px;"><div class="a cc" style="left:0px;top:0;width:137px;height:26px">CA</div></div>
<div class="a cell lf" style="left:1063px;top:267px;width:238px;height:26px;"><div class="a lc" style="left:3px;top:0;height:26px">marketing@pierrecarapetian.com</div></div>
<div class="a cell " style="left:1302px;top:267px;width:117px;height:26px;"><div class="a cc" style="left:0px;top:0;width:117px;height:26px">11-10-2024</div></div>
<div class="a cell chip no" style="left:1420px;top:267px;width:148px;height:26px;"><div class="a cc" style="left:0px;top:0;width:126px;height:26px">No</div></div>
<div class="a tri" style="left:1552px;top:277.5px;border-top-width:5px;border-top-color:#5b0a0a"></div>
<div class="a cell " style="left:52px;top:294px;width:144px;height:26px;"><div class="a cc" style="left:-7px;top:0;width:151px;height:26px">Financial&nbsp;</div></div>
<div class="a cell ln" style="left:197px;top:294px;width:181px;height:26px;"><div class="a lc" style="left:3px;top:0;height:26px"><a>https://fhmtg.com/</a></div></div>
<div class="a cell " style="left:505px;top:294px;width:46px;height:26px;"><div class="a cc" style="left:0px;top:0;width:46px;height:26px">40</div></div>
<div class="a cell " style="left:552px;top:294px;width:38px;height:26px;"><div class="a cc" style="left:0px;top:0;width:38px;height:26px">29</div></div>
<div class="a cell " style="left:591px;top:294px;width:104px;height:26px;"><div class="a cc" style="left:0px;top:0;width:104px;height:26px">22y</div></div>
<div class="a cell " style="left:696px;top:294px;width:99px;height:26px;color:#e8262b"><div class="a cc" style="left:0px;top:0;width:99px;height:26px">11</div></div>
<div class="a cell " style="left:796px;top:294px;width:128px;height:26px;"><div class="a cc" style="left:0px;top:0;width:128px;height:26px">2.4k</div></div>
<div class="a cell " style="left:925px;top:294px;width:137px;height:26px;"><div class="a cc" style="left:0px;top:0;width:137px;height:26px">USA</div></div>
<div class="a cell lf" style="left:1063px;top:294px;width:238px;height:26px;"><div class="a lc" style="left:3px;top:0;height:26px">info@fhmtg.com</div></div>
<div class="a cell " style="left:1302px;top:294px;width:117px;height:26px;"><div class="a cc" style="left:0px;top:0;width:117px;height:26px">11-11-2024</div></div>
<div class="a cell chip no" style="left:1420px;top:294px;width:148px;height:26px;"><div class="a cc" style="left:0px;top:0;width:126px;height:26px">No</div></div>
<div class="a tri" style="left:1552px;top:304.5px;border-top-width:5px;border-top-color:#5b0a0a"></div>
<div class="a cell " style="left:52px;top:321px;width:144px;height:26px;"><div class="a cc" style="left:-7px;top:0;width:151px;height:26px">Mortgage</div></div>
<div class="a cell ln" style="left:197px;top:321px;width:181px;height:26px;"><div class="a lc" style="left:3px;top:0;height:26px"><a>https://www.scotsmanguide.com/</a></div></div>
<div class="a cell " style="left:505px;top:321px;width:46px;height:26px;"><div class="a cc" style="left:0px;top:0;width:46px;height:26px">53</div></div>
<div class="a cell " style="left:552px;top:321px;width:38px;height:26px;"><div class="a cc" style="left:0px;top:0;width:38px;height:26px">37</div></div>
<div class="a cell " style="left:591px;top:321px;width:104px;height:26px;"><div class="a cc" style="left:0px;top:0;width:104px;height:26px">26y</div></div>
<div class="a cell " style="left:696px;top:321px;width:99px;height:26px;color:#e8262b"><div class="a cc" style="left:0px;top:0;width:99px;height:26px">22</div></div>
<div class="a cell " style="left:796px;top:321px;width:128px;height:26px;"><div class="a cc" style="left:0px;top:0;width:128px;height:26px">17.5k</div></div>
<div class="a cell " style="left:925px;top:321px;width:137px;height:26px;"><div class="a cc" style="left:0px;top:0;width:137px;height:26px">USA</div></div>
<div class="a cell lf" style="left:1063px;top:321px;width:238px;height:26px;"><div class="a lc" style="left:3px;top:0;height:26px">general@scotsmanguide.com</div></div>
<div class="a cell " style="left:1302px;top:321px;width:117px;height:26px;"><div class="a cc" style="left:0px;top:0;width:117px;height:26px">11-12-2024</div></div>
<div class="a cell chip no" style="left:1420px;top:321px;width:148px;height:26px;"><div class="a cc" style="left:0px;top:0;width:126px;height:26px">No</div></div>
<div class="a tri" style="left:1552px;top:331.5px;border-top-width:5px;border-top-color:#5b0a0a"></div>
<div class="a cell " style="left:52px;top:348px;width:144px;height:26px;"><div class="a cc" style="left:-7px;top:0;width:151px;height:26px">Mortgage</div></div>
<div class="a cell ln" style="left:197px;top:348px;width:181px;height:26px;"><div class="a lc" style="left:3px;top:0;height:26px"><a>https://www.needingadvice.co.uk/</a></div></div>
<div class="a cell " style="left:505px;top:348px;width:46px;height:26px;"><div class="a cc" style="left:0px;top:0;width:46px;height:26px">56</div></div>
<div class="a cell " style="left:552px;top:348px;width:38px;height:26px;"><div class="a cc" style="left:0px;top:0;width:38px;height:26px">21</div></div>
<div class="a cell " style="left:591px;top:348px;width:104px;height:26px;"><div class="a cc" style="left:0px;top:0;width:104px;height:26px">17y</div></div>
<div class="a cell " style="left:696px;top:348px;width:99px;height:26px;"><div class="a cc" style="left:0px;top:0;width:99px;height:26px">1</div></div>
<div class="a cell " style="left:796px;top:348px;width:128px;height:26px;"><div class="a cc" style="left:0px;top:0;width:128px;height:26px">1.2k</div></div>
<div class="a cell " style="left:925px;top:348px;width:137px;height:26px;"><div class="a cc" style="left:0px;top:0;width:137px;height:26px">UK</div></div>
<div class="a cell lf" style="left:1063px;top:348px;width:238px;height:26px;"><div class="a lc" style="left:3px;top:0;height:26px">damian@needingadvice.co.uk</div></div>
<div class="a cell " style="left:1302px;top:348px;width:117px;height:26px;"><div class="a cc" style="left:0px;top:0;width:117px;height:26px">11-13-2024</div></div>
<div class="a cell chip no" style="left:1420px;top:348px;width:148px;height:26px;"><div class="a cc" style="left:0px;top:0;width:126px;height:26px">No</div></div>
<div class="a tri" style="left:1552px;top:358.5px;border-top-width:5px;border-top-color:#5b0a0a"></div>
<div class="a cell " style="left:52px;top:375px;width:144px;height:26px;"><div class="a cc" style="left:-7px;top:0;width:151px;height:26px">Mortgage</div></div>
<div class="a cell ln" style="left:197px;top:375px;width:181px;height:26px;"><div class="a lc" style="left:3px;top:0;height:26px"><a>https://fangwallet.com/</a></div></div>
<div class="a cell " style="left:505px;top:375px;width:46px;height:26px;"><div class="a cc" style="left:0px;top:0;width:46px;height:26px">52</div></div>
<div class="a cell " style="left:552px;top:375px;width:38px;height:26px;"><div class="a cc" style="left:0px;top:0;width:38px;height:26px">25</div></div>
<div class="a cell " style="left:591px;top:375px;width:104px;height:26px;"><div class="a cc" style="left:0px;top:0;width:104px;height:26px">6y</div></div>
<div class="a cell " style="left:696px;top:375px;width:99px;height:26px;"><div class="a cc" style="left:0px;top:0;width:99px;height:26px">1</div></div>
<div class="a cell " style="left:796px;top:375px;width:128px;height:26px;"><div class="a cc" style="left:0px;top:0;width:128px;height:26px">420</div></div>
<div class="a cell " style="left:925px;top:375px;width:137px;height:26px;"><div class="a cc" style="left:0px;top:0;width:137px;height:26px">USA</div></div>
<div class="a cell lf" style="left:1063px;top:375px;width:238px;height:26px;"><div class="a lc" style="left:3px;top:0;height:26px">fangwallet@gmail.com</div></div>
<div class="a cell " style="left:1302px;top:375px;width:117px;height:26px;"><div class="a cc" style="left:0px;top:0;width:117px;height:26px">11-14-2024</div></div>
<div class="a cell chip yes" style="left:1420px;top:375px;width:148px;height:26px;"><div class="a cc" style="left:0px;top:0;width:126px;height:26px">Yes</div></div>
<div class="a tri" style="left:1552px;top:385.5px;border-top-width:5px;border-top-color:#d9e4dc"></div>
<div class="a cell " style="left:1569px;top:375px;width:148px;height:26px;"><div class="a cc" style="left:0px;top:0;width:148px;height:26px">11-09-2024</div></div>
<div class="a cell " style="left:52px;top:402px;width:144px;height:26px;"><div class="a cc" style="left:-7px;top:0;width:151px;height:26px">Mortgage</div></div>
<div class="a cell ln" style="left:197px;top:402px;width:181px;height:26px;"><div class="a lc" style="left:3px;top:0;height:26px"><a>https://propertypressonline.com/</a></div></div>
<div class="a cell " style="left:505px;top:402px;width:46px;height:26px;"><div class="a cc" style="left:0px;top:0;width:46px;height:26px">18</div></div>
<div class="a cell " style="left:552px;top:402px;width:38px;height:26px;"><div class="a cc" style="left:0px;top:0;width:38px;height:26px">27</div></div>
<div class="a cell " style="left:591px;top:402px;width:104px;height:26px;"><div class="a cc" style="left:0px;top:0;width:104px;height:26px">5y</div></div>
<div class="a cell " style="left:696px;top:402px;width:99px;height:26px;"><div class="a cc" style="left:0px;top:0;width:99px;height:26px">1</div></div>
<div class="a cell " style="left:796px;top:402px;width:128px;height:26px;"><div class="a cc" style="left:0px;top:0;width:128px;height:26px">3.3k</div></div>
<div class="a cell " style="left:925px;top:402px;width:137px;height:26px;"><div class="a cc" style="left:0px;top:0;width:137px;height:26px">UK</div></div>
<div class="a cell lf" style="left:1063px;top:402px;width:238px;height:26px;"><div class="a lc" style="left:3px;top:0;height:26px">editor@propertypressonline.co.uk</div></div>
<div class="a cell " style="left:1302px;top:402px;width:117px;height:26px;"><div class="a cc" style="left:0px;top:0;width:117px;height:26px">11-15-2024</div></div>
<div class="a cell chip no" style="left:1420px;top:402px;width:148px;height:26px;"><div class="a cc" style="left:0px;top:0;width:126px;height:26px">No</div></div>
<div class="a tri" style="left:1552px;top:412.5px;border-top-width:5px;border-top-color:#5b0a0a"></div>
<div class="a cell " style="left:52px;top:429px;width:144px;height:26px;"><div class="a cc" style="left:-7px;top:0;width:151px;height:26px">Financial&nbsp;</div></div>
<div class="a cell ln" style="left:197px;top:429px;width:181px;height:26px;"><div class="a lc" style="left:3px;top:0;height:26px"><a>https://www.excelcapmanagement.com/</a></div></div>
<div class="a cell " style="left:505px;top:429px;width:46px;height:26px;"><div class="a cc" style="left:0px;top:0;width:46px;height:26px">33</div></div>
<div class="a cell " style="left:552px;top:429px;width:38px;height:26px;"><div class="a cc" style="left:0px;top:0;width:38px;height:26px">30</div></div>
<div class="a cell " style="left:591px;top:429px;width:104px;height:26px;"><div class="a cc" style="left:0px;top:0;width:104px;height:26px">11y</div></div>
<div class="a cell " style="left:696px;top:429px;width:99px;height:26px;"><div class="a cc" style="left:0px;top:0;width:99px;height:26px">1</div></div>
<div class="a cell " style="left:796px;top:429px;width:128px;height:26px;"><div class="a cc" style="left:0px;top:0;width:128px;height:26px">6.9k</div></div>
<div class="a cell " style="left:925px;top:429px;width:137px;height:26px;"><div class="a cc" style="left:0px;top:0;width:137px;height:26px">USA</div></div>
<div class="a cell lf" style="left:1063px;top:429px;width:238px;height:26px;"><div class="a lc" style="left:3px;top:0;height:26px">info@excelcapmanagement.com</div></div>
<div class="a cell " style="left:1302px;top:429px;width:117px;height:26px;"><div class="a cc" style="left:0px;top:0;width:117px;height:26px">11-16-2024</div></div>
<div class="a cell chip no" style="left:1420px;top:429px;width:148px;height:26px;"><div class="a cc" style="left:0px;top:0;width:126px;height:26px">No</div></div>
<div class="a tri" style="left:1552px;top:439.5px;border-top-width:5px;border-top-color:#5b0a0a"></div>
<div class="a cell " style="left:52px;top:456px;width:144px;height:26px;"><div class="a cc" style="left:-7px;top:0;width:151px;height:26px">Mortgage</div></div>
<div class="a cell ln" style="left:197px;top:456px;width:181px;height:26px;"><div class="a lc" style="left:3px;top:0;height:26px"><a>https://www.beatingbrokers.com/</a></div></div>
<div class="a cell " style="left:505px;top:456px;width:46px;height:26px;"><div class="a cc" style="left:0px;top:0;width:46px;height:26px">32</div></div>
<div class="a cell " style="left:552px;top:456px;width:38px;height:26px;"><div class="a cc" style="left:0px;top:0;width:38px;height:26px">19</div></div>
<div class="a cell " style="left:591px;top:456px;width:104px;height:26px;"><div class="a cc" style="left:0px;top:0;width:104px;height:26px">16y</div></div>
<div class="a cell " style="left:696px;top:456px;width:99px;height:26px;"><div class="a cc" style="left:0px;top:0;width:99px;height:26px">1</div></div>
<div class="a cell " style="left:796px;top:456px;width:128px;height:26px;"><div class="a cc" style="left:0px;top:0;width:128px;height:26px">1.8k</div></div>
<div class="a cell " style="left:925px;top:456px;width:137px;height:26px;"><div class="a cc" style="left:0px;top:0;width:137px;height:26px">UK</div></div>
<div class="a cell lf" style="left:1063px;top:456px;width:238px;height:26px;"><div class="a lc" style="left:3px;top:0;height:26px">districtmedia1@gmail.com</div></div>
<div class="a cell " style="left:1302px;top:456px;width:117px;height:26px;"><div class="a cc" style="left:0px;top:0;width:117px;height:26px">11-17-2024</div></div>
<div class="a cell chip yes" style="left:1420px;top:456px;width:148px;height:26px;"><div class="a cc" style="left:0px;top:0;width:126px;height:26px">Yes</div></div>
<div class="a tri" style="left:1552px;top:466.5px;border-top-width:5px;border-top-color:#d9e4dc"></div>
<div class="a cell " style="left:1569px;top:456px;width:148px;height:26px;"><div class="a cc" style="left:0px;top:0;width:148px;height:26px">11-09-2024</div></div>
<div class="a cell " style="left:52px;top:483px;width:144px;height:26px;"><div class="a cc" style="left:-7px;top:0;width:151px;height:26px">Finance</div></div>
<div class="a cell ln" style="left:197px;top:483px;width:181px;height:26px;"><div class="a lc" style="left:3px;top:0;height:26px"><a>https://www.abcmoney.co.uk/</a></div></div>
<div class="a cell " style="left:505px;top:483px;width:46px;height:26px;"><div class="a cc" style="left:0px;top:0;width:46px;height:26px">71</div></div>
<div class="a cell " style="left:552px;top:483px;width:38px;height:26px;"><div class="a cc" style="left:0px;top:0;width:38px;height:26px">29</div></div>
<div class="a cell " style="left:591px;top:483px;width:104px;height:26px;"><div class="a cc" style="left:0px;top:0;width:104px;height:26px">9y</div></div>
<div class="a cell " style="left:696px;top:483px;width:99px;height:26px;"><div class="a cc" style="left:0px;top:0;width:99px;height:26px">1</div></div>
<div class="a cell " style="left:796px;top:483px;width:128px;height:26px;"><div class="a cc" style="left:0px;top:0;width:128px;height:26px">5k</div></div>
<div class="a cell " style="left:925px;top:483px;width:137px;height:26px;"><div class="a cc" style="left:0px;top:0;width:137px;height:26px">UK</div></div>
<div class="a cell lf" style="left:1063px;top:483px;width:238px;height:26px;"><div class="a lc" style="left:3px;top:0;height:26px">editorials@abcmoney.co.uk</div></div>
<div class="a cell " style="left:1302px;top:483px;width:117px;height:26px;"><div class="a cc" style="left:0px;top:0;width:117px;height:26px">11-18-2024</div></div>
<div class="a cell chip yes" style="left:1420px;top:483px;width:148px;height:26px;"><div class="a cc" style="left:0px;top:0;width:126px;height:26px">Yes</div></div>
<div class="a tri" style="left:1552px;top:493.5px;border-top-width:5px;border-top-color:#d9e4dc"></div>
<div class="a cell " style="left:1569px;top:483px;width:148px;height:26px;"><div class="a cc" style="left:0px;top:0;width:148px;height:26px">11-09-2024</div></div>
<div class="a cell " style="left:52px;top:510px;width:144px;height:26px;"><div class="a cc" style="left:-7px;top:0;width:151px;height:26px">Mortgage</div></div>
<div class="a cell ln" style="left:197px;top:510px;width:181px;height:26px;"><div class="a lc" style="left:3px;top:0;height:26px"><a>https://www.trinityfinancialgroup.co.uk/</a></div></div>
<div class="a cell " style="left:505px;top:510px;width:46px;height:26px;"><div class="a cc" style="left:0px;top:0;width:46px;height:26px">37</div></div>
<div class="a cell " style="left:552px;top:510px;width:38px;height:26px;"><div class="a cc" style="left:0px;top:0;width:38px;height:26px">25</div></div>
<div class="a cell " style="left:591px;top:510px;width:104px;height:26px;"><div class="a cc" style="left:0px;top:0;width:104px;height:26px">15y</div></div>
<div class="a cell " style="left:696px;top:510px;width:99px;height:26px;"><div class="a cc" style="left:0px;top:0;width:99px;height:26px">1</div></div>
<div class="a cell " style="left:796px;top:510px;width:128px;height:26px;"><div class="a cc" style="left:0px;top:0;width:128px;height:26px">4.2k</div></div>
<div class="a cell " style="left:925px;top:510px;width:137px;height:26px;"><div class="a cc" style="left:0px;top:0;width:137px;height:26px">UK</div></div>
<div class="a cell lf" style="left:1063px;top:510px;width:238px;height:26px;"><div class="a lc" style="left:3px;top:0;height:26px">enquiries@trinityfinancialgroup.co.uk</div></div>
<div class="a cell " style="left:1302px;top:510px;width:117px;height:26px;"><div class="a cc" style="left:0px;top:0;width:117px;height:26px">11-19-2024</div></div>
<div class="a cell chip no" style="left:1420px;top:510px;width:148px;height:26px;"><div class="a cc" style="left:0px;top:0;width:126px;height:26px">No</div></div>
<div class="a tri" style="left:1552px;top:520.5px;border-top-width:5px;border-top-color:#5b0a0a"></div>
<div class="a cell ln" style="left:197px;top:537px;width:181px;height:26px;"><div class="a lc" style="left:3px;top:0;height:26px"><a>https://www.duedilio.com/</a></div></div>
<div class="a cell " style="left:505px;top:537px;width:46px;height:26px;"><div class="a cc" style="left:0px;top:0;width:46px;height:26px">21</div></div>
<div class="a cell " style="left:552px;top:537px;width:38px;height:26px;"><div class="a cc" style="left:0px;top:0;width:38px;height:26px">22</div></div>
<div class="a cell " style="left:591px;top:537px;width:104px;height:26px;"><div class="a cc" style="left:0px;top:0;width:104px;height:26px">3y</div></div>
<div class="a cell " style="left:696px;top:537px;width:99px;height:26px;"><div class="a cc" style="left:0px;top:0;width:99px;height:26px">1</div></div>
<div class="a cell " style="left:796px;top:537px;width:128px;height:26px;"><div class="a cc" style="left:0px;top:0;width:128px;height:26px">544</div></div>
<div class="a cell " style="left:925px;top:537px;width:137px;height:26px;"><div class="a cc" style="left:0px;top:0;width:137px;height:26px">USA</div></div>
<div class="a cell lf" style="left:1063px;top:537px;width:238px;height:26px;"><div class="a lc" style="left:3px;top:0;height:26px">hey@duedilio.com</div></div>
<div class="a cell " style="left:1302px;top:537px;width:117px;height:26px;"><div class="a cc" style="left:0px;top:0;width:117px;height:26px">11-20-2024</div></div>
<div class="a cell chip no" style="left:1420px;top:537px;width:148px;height:26px;"><div class="a cc" style="left:0px;top:0;width:126px;height:26px">No</div></div>
<div class="a tri" style="left:1552px;top:547.5px;border-top-width:5px;border-top-color:#5b0a0a"></div>
<div class="a cell ln" style="left:197px;top:564px;width:181px;height:26px;"><div class="a lc" style="left:3px;top:0;height:26px"><a>https://www.b12.io/</a></div></div>
<div class="a cell " style="left:505px;top:564px;width:46px;height:26px;"><div class="a cc" style="left:0px;top:0;width:46px;height:26px">46</div></div>
<div class="a cell " style="left:552px;top:564px;width:38px;height:26px;"><div class="a cc" style="left:0px;top:0;width:38px;height:26px">36</div></div>
<div class="a cell " style="left:696px;top:564px;width:99px;height:26px;"><div class="a cc" style="left:0px;top:0;width:99px;height:26px">1</div></div>
<div class="a cell " style="left:796px;top:564px;width:128px;height:26px;"><div class="a cc" style="left:0px;top:0;width:128px;height:26px">61.7k</div></div>
<div class="a cell " style="left:925px;top:564px;width:137px;height:26px;"><div class="a cc" style="left:0px;top:0;width:137px;height:26px">USA</div></div>
<div class="a cell lf" style="left:1063px;top:564px;width:238px;height:26px;"><div class="a lc" style="left:3px;top:0;height:26px">hello@b12.io / kastnerkev@gmail.com</div></div>
<div class="a cell " style="left:1302px;top:564px;width:117px;height:26px;"><div class="a cc" style="left:0px;top:0;width:117px;height:26px">11-21-2024</div></div>
<div class="a cell chip yes" style="left:1420px;top:564px;width:148px;height:26px;"><div class="a cc" style="left:0px;top:0;width:126px;height:26px">Yes</div></div>
<div class="a tri" style="left:1552px;top:574.5px;border-top-width:5px;border-top-color:#d9e4dc"></div>
<div class="a cell " style="left:1569px;top:564px;width:148px;height:26px;"><div class="a cc" style="left:0px;top:0;width:148px;height:26px">11-09-2024</div></div>
<div class="a cell " style="left:52px;top:591px;width:144px;height:26px;"><div class="a cc" style="left:-7px;top:0;width:151px;height:26px">Finance/Real Estate</div></div>
<div class="a cell ln" style="left:197px;top:591px;width:181px;height:26px;"><div class="a lc" style="left:3px;top:0;height:26px"><a>https://realtormontreal.ca/</a></div></div>
<div class="a cell " style="left:505px;top:591px;width:46px;height:26px;"><div class="a cc" style="left:0px;top:0;width:46px;height:26px">17</div></div>
<div class="a cell " style="left:552px;top:591px;width:38px;height:26px;"><div class="a cc" style="left:0px;top:0;width:38px;height:26px">20</div></div>
<div class="a cell " style="left:696px;top:591px;width:99px;height:26px;"><div class="a cc" style="left:0px;top:0;width:99px;height:26px">1</div></div>
<div class="a cell " style="left:796px;top:591px;width:128px;height:26px;"><div class="a cc" style="left:0px;top:0;width:128px;height:26px">2.3k</div></div>
<div class="a cell " style="left:925px;top:591px;width:137px;height:26px;"><div class="a cc" style="left:0px;top:0;width:137px;height:26px">CA</div></div>
<div class="a cell lf" style="left:1063px;top:591px;width:238px;height:26px;"><div class="a lc" style="left:3px;top:0;height:26px">alpperez@realtormontreal.ca</div></div>
<div class="a cell " style="left:1302px;top:591px;width:117px;height:26px;"><div class="a cc" style="left:0px;top:0;width:117px;height:26px">11-22-2024</div></div>
<div class="a cell chip yes" style="left:1420px;top:591px;width:148px;height:26px;"><div class="a cc" style="left:0px;top:0;width:126px;height:26px">Yes</div></div>
<div class="a tri" style="left:1552px;top:601.5px;border-top-width:5px;border-top-color:#d9e4dc"></div>
<div class="a cell " style="left:1569px;top:591px;width:148px;height:26px;"><div class="a cc" style="left:0px;top:0;width:148px;height:26px">11-09-2024</div></div>
<div class="a cell " style="left:52px;top:618px;width:144px;height:26px;"><div class="a cc" style="left:-7px;top:0;width:151px;height:26px">Mortgage</div></div>
<div class="a cell ln" style="left:197px;top:618px;width:181px;height:26px;"><div class="a lc" style="left:3px;top:0;height:26px"><a>https://www.mpamag.com/</a></div></div>
<div class="a cell " style="left:505px;top:618px;width:46px;height:26px;"><div class="a cc" style="left:0px;top:0;width:46px;height:26px">59</div></div>
<div class="a cell " style="left:552px;top:618px;width:38px;height:26px;"><div class="a cc" style="left:0px;top:0;width:38px;height:26px">45</div></div>
<div class="a cell " style="left:591px;top:618px;width:104px;height:26px;"><div class="a cc" style="left:0px;top:0;width:104px;height:26px">11y</div></div>
<div class="a cell " style="left:696px;top:618px;width:99px;height:26px;"><div class="a cc" style="left:0px;top:0;width:99px;height:26px">1</div></div>
<div class="a cell " style="left:796px;top:618px;width:128px;height:26px;"><div class="a cc" style="left:0px;top:0;width:128px;height:26px">12.6k</div></div>
<div class="a cell " style="left:925px;top:618px;width:137px;height:26px;"><div class="a cc" style="left:0px;top:0;width:137px;height:26px">USA</div></div>
<div class="a cell lf" style="left:1063px;top:618px;width:238px;height:26px;"><div class="a lc" style="left:3px;top:0;height:26px">paul.lucas@keymedia.com</div></div>
<div class="a cell " style="left:1302px;top:618px;width:117px;height:26px;"><div class="a cc" style="left:0px;top:0;width:117px;height:26px">11-23-2024</div></div>
<div class="a cell chip no" style="left:1420px;top:618px;width:148px;height:26px;"><div class="a cc" style="left:0px;top:0;width:126px;height:26px">No</div></div>
<div class="a tri" style="left:1552px;top:628.5px;border-top-width:5px;border-top-color:#5b0a0a"></div>
<div class="a cell ln" style="left:197px;top:645px;width:181px;height:26px;"><div class="a lc" style="left:3px;top:0;height:26px"><a>https://financialadvisers.co.uk/</a></div></div>
<div class="a cell " style="left:505px;top:645px;width:46px;height:26px;"><div class="a cc" style="left:0px;top:0;width:46px;height:26px">29</div></div>
<div class="a cell " style="left:552px;top:645px;width:38px;height:26px;"><div class="a cc" style="left:0px;top:0;width:38px;height:26px">23</div></div>
<div class="a cell " style="left:591px;top:645px;width:104px;height:26px;"><div class="a cc" style="left:0px;top:0;width:104px;height:26px">20y</div></div>
<div class="a cell " style="left:696px;top:645px;width:99px;height:26px;"><div class="a cc" style="left:0px;top:0;width:99px;height:26px">1</div></div>
<div class="a cell " style="left:796px;top:645px;width:128px;height:26px;"><div class="a cc" style="left:0px;top:0;width:128px;height:26px">1.2k</div></div>
<div class="a cell " style="left:925px;top:645px;width:137px;height:26px;"><div class="a cc" style="left:0px;top:0;width:137px;height:26px">UK</div></div>
<div class="a cell lf" style="left:1063px;top:645px;width:238px;height:26px;"><div class="a lc" style="left:3px;top:0;height:26px">admin@financialadvisers.co.uk</div></div>
<div class="a cell " style="left:1302px;top:645px;width:117px;height:26px;"><div class="a cc" style="left:0px;top:0;width:117px;height:26px">11-24-2024</div></div>
<div class="a cell chip no" style="left:1420px;top:645px;width:148px;height:26px;"><div class="a cc" style="left:0px;top:0;width:126px;height:26px">No</div></div>
<div class="a tri" style="left:1552px;top:655.5px;border-top-width:5px;border-top-color:#5b0a0a"></div>
<div class="a cell ln" style="left:197px;top:672px;width:181px;height:26px;"><div class="a lc" style="left:3px;top:0;height:26px"><a>https://londonlovesproperty.com/</a></div></div>
<div class="a cell " style="left:505px;top:672px;width:46px;height:26px;"><div class="a cc" style="left:0px;top:0;width:46px;height:26px">28</div></div>
<div class="a cell " style="left:552px;top:672px;width:38px;height:26px;"><div class="a cc" style="left:0px;top:0;width:38px;height:26px">23</div></div>
<div class="a cell " style="left:591px;top:672px;width:104px;height:26px;"><div class="a cc" style="left:0px;top:0;width:104px;height:26px">5y</div></div>
<div class="a cell " style="left:696px;top:672px;width:99px;height:26px;"><div class="a cc" style="left:0px;top:0;width:99px;height:26px">1</div></div>
<div class="a cell " style="left:796px;top:672px;width:128px;height:26px;"><div class="a cc" style="left:0px;top:0;width:128px;height:26px">920</div></div>
<div class="a cell " style="left:925px;top:672px;width:137px;height:26px;"><div class="a cc" style="left:0px;top:0;width:137px;height:26px">UK</div></div>
<div class="a cell lf" style="left:1063px;top:672px;width:238px;height:26px;"><div class="a lc" style="left:3px;top:0;height:26px">editor@londonlovesproperty.com</div></div>
<div class="a cell " style="left:1302px;top:672px;width:117px;height:26px;"><div class="a cc" style="left:0px;top:0;width:117px;height:26px">11-25-2024</div></div>
<div class="a cell chip no" style="left:1420px;top:672px;width:148px;height:26px;"><div class="a cc" style="left:0px;top:0;width:126px;height:26px">No</div></div>
<div class="a tri" style="left:1552px;top:682.5px;border-top-width:5px;border-top-color:#5b0a0a"></div>
<div class="a cell ln" style="left:197px;top:699px;width:181px;height:26px;"><div class="a lc" style="left:3px;top:0;height:26px"><a>https://app.newspage.media/</a></div></div>
<div class="a cell " style="left:505px;top:699px;width:46px;height:26px;"><div class="a cc" style="left:0px;top:0;width:46px;height:26px">31</div></div>
<div class="a cell " style="left:552px;top:699px;width:38px;height:26px;"><div class="a cc" style="left:0px;top:0;width:38px;height:26px">19</div></div>
<div class="a cell " style="left:696px;top:699px;width:99px;height:26px;"><div class="a cc" style="left:0px;top:0;width:99px;height:26px">1</div></div>
<div class="a cell " style="left:796px;top:699px;width:128px;height:26px;"><div class="a cc" style="left:0px;top:0;width:128px;height:26px">54</div></div>
<div class="a cell " style="left:925px;top:699px;width:137px;height:26px;"><div class="a cc" style="left:0px;top:0;width:137px;height:26px">UK</div></div>
<div class="a cell " style="left:1302px;top:699px;width:117px;height:26px;"><div class="a cc" style="left:0px;top:0;width:117px;height:26px">11-26-2024</div></div>
<div class="a cell chip no" style="left:1420px;top:699px;width:148px;height:26px;"><div class="a cc" style="left:0px;top:0;width:126px;height:26px">No</div></div>
<div class="a tri" style="left:1552px;top:709.5px;border-top-width:5px;border-top-color:#5b0a0a"></div>
<div class="a cell ln" style="left:197px;top:726px;width:181px;height:26px;"><div class="a lc" style="left:3px;top:0;height:26px"><a>https://www.birminghamlive.co.uk/</a></div></div>
<div class="a cell " style="left:505px;top:726px;width:46px;height:26px;"><div class="a cc" style="left:0px;top:0;width:46px;height:26px">82</div></div>
<div class="a cell " style="left:552px;top:726px;width:38px;height:26px;"><div class="a cc" style="left:0px;top:0;width:38px;height:26px">68</div></div>
<div class="a cell " style="left:591px;top:726px;width:104px;height:26px;"><div class="a cc" style="left:0px;top:0;width:104px;height:26px">18y</div></div>
<div class="a cell " style="left:696px;top:726px;width:99px;height:26px;"><div class="a cc" style="left:0px;top:0;width:99px;height:26px">1</div></div>
<div class="a cell " style="left:796px;top:726px;width:128px;height:26px;"><div class="a cc" style="left:0px;top:0;width:128px;height:26px">2.5M</div></div>
<div class="a cell " style="left:925px;top:726px;width:137px;height:26px;"><div class="a cc" style="left:0px;top:0;width:137px;height:26px">UK</div></div>
<div class="a cell lf" style="left:1063px;top:726px;width:238px;height:26px;"><div class="a lc" style="left:3px;top:0;height:26px">newsdesk@birminghamlive.co.uk</div></div>
<div class="a cell " style="left:1302px;top:726px;width:117px;height:26px;"><div class="a cc" style="left:0px;top:0;width:117px;height:26px">11-27-2024</div></div>
<div class="a cell chip no" style="left:1420px;top:726px;width:148px;height:26px;"><div class="a cc" style="left:0px;top:0;width:126px;height:26px">No</div></div>
<div class="a tri" style="left:1552px;top:736.5px;border-top-width:5px;border-top-color:#5b0a0a"></div>
<div class="a cell ln" style="left:197px;top:753px;width:181px;height:26px;"><div class="a lc" style="left:3px;top:0;height:26px"><a>https://www.mpamag.com/ca/</a></div></div>
<div class="a cell " style="left:505px;top:753px;width:46px;height:26px;"><div class="a cc" style="left:0px;top:0;width:46px;height:26px">59</div></div>
<div class="a cell " style="left:552px;top:753px;width:38px;height:26px;"><div class="a cc" style="left:0px;top:0;width:38px;height:26px">45</div></div>
<div class="a cell " style="left:591px;top:753px;width:104px;height:26px;"><div class="a cc" style="left:0px;top:0;width:104px;height:26px">11y</div></div>
<div class="a cell " style="left:696px;top:753px;width:99px;height:26px;"><div class="a cc" style="left:0px;top:0;width:99px;height:26px">1</div></div>
<div class="a cell " style="left:796px;top:753px;width:128px;height:26px;"><div class="a cc" style="left:0px;top:0;width:128px;height:26px">11.9k</div></div>
<div class="a cell " style="left:925px;top:753px;width:137px;height:26px;"><div class="a cc" style="left:0px;top:0;width:137px;height:26px">UK</div></div>
<div class="a cell lf" style="left:1063px;top:753px;width:238px;height:26px;"><div class="a lc" style="left:3px;top:0;height:26px">simon.meadows@keymedia.com</div></div>
<div class="a cell " style="left:1302px;top:753px;width:117px;height:26px;"><div class="a cc" style="left:0px;top:0;width:117px;height:26px">11-28-2024</div></div>
<div class="a cell chip yes" style="left:1420px;top:753px;width:148px;height:26px;"><div class="a cc" style="left:0px;top:0;width:126px;height:26px">Yes</div></div>
<div class="a tri" style="left:1552px;top:763.5px;border-top-width:5px;border-top-color:#d9e4dc"></div>
<div class="a cell " style="left:1569px;top:753px;width:148px;height:26px;"><div class="a cc" style="left:0px;top:0;width:148px;height:26px">11-09-2024</div></div>
<div class="a cell" style="left:1867px;top:375px;width:40px;height:26px"><span style="position:absolute;left:33px;top:0">11-09-2024</span></div>
<div class="a cell ln wrap" style="left:379px;top:645px;width:125px;height:170px"><a style="position:absolute;left:3px;top:58px;line-height:23px">https://rosehillfs<br>.com/</a></div>
</body></html>
